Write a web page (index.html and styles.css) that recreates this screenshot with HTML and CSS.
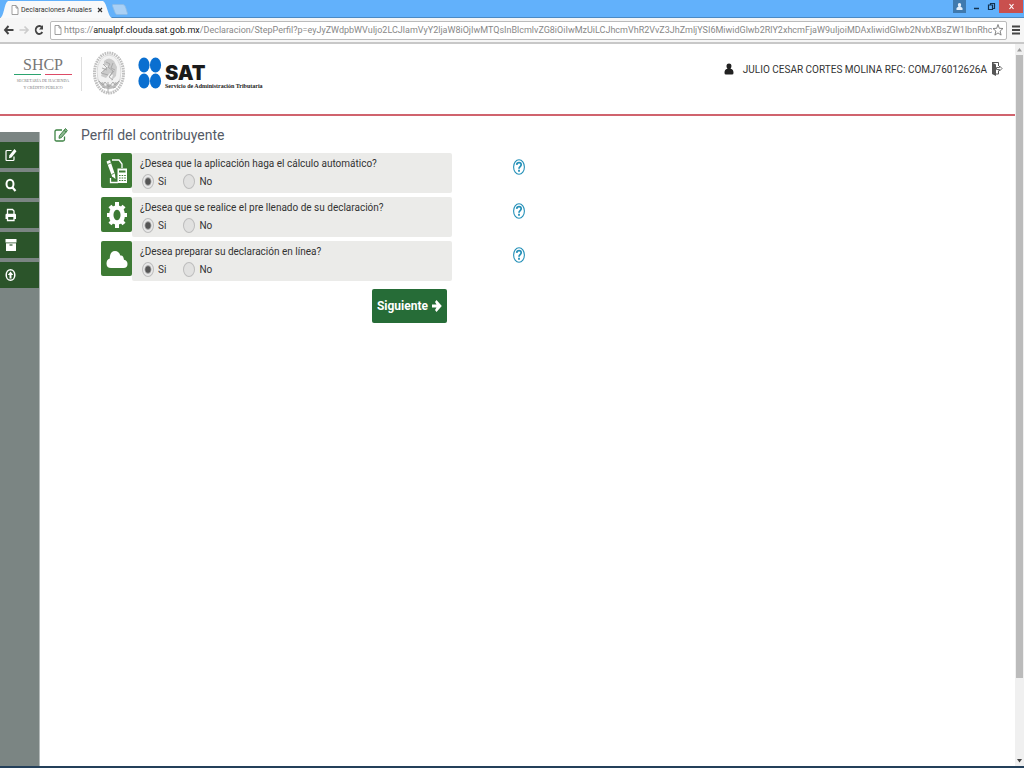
FILE: index.html
```html
<!DOCTYPE html>
<html lang="es">
<head>
    <meta charset="UTF-8">
    <meta name="viewport" content="width=device-width, initial-scale=1.0">
    <title>Declaraciones Anuales</title>
    <link rel="stylesheet" href="styles.css">
</head>
<body>
    <!-- Barra de pestañas -->
    <div class="tab-strip">
        <div class="tab">
            <svg class="tab-shape" viewBox="0 0 112 18" preserveAspectRatio="none"><path d="M0 18 C4 17 4 3 8 1 H103 C107 3 108 17 112 18 Z" fill="#f8f9fa"/></svg>
            <svg class="page-icon" viewBox="0 0 8 10"><path d="M1 .5h4l2 2.500v6.500H1z M5 .5v2.500h2" fill="#fff" stroke="#888" stroke-width=".8"/></svg>
            <span class="tab-title">Declaraciones Anuales</span>
            <button class="tab-close" type="button" aria-label="Cerrar pestaña"><svg viewBox="0 0 6 6"><path d="M1 1l4 4M5 1l-4 4" stroke="#333" stroke-width="1.200"/></svg></button>
        </div>
        <button class="new-tab" type="button" aria-label="Nueva pestaña"><svg viewBox="0 0 16 11"><path d="M1 .5h10q2 0 3 4l1.500 5q0 1-1 1H5q-1.500 0-2-2L.5 2Q0 .5 1 .5z" fill="#a9d0f5" stroke="#8dbbe4" stroke-width=".8"/></svg></button>
        <div class="window-buttons">
            <button class="win-user" type="button" aria-label="Usuario"><svg viewBox="0 0 13 13"><path d="M6.500 3a1.700 1.900 0 0 1 1 3.400L9.500 8v2h-6V8l2-1.600A1.700 1.900 0 0 1 6.500 3z" fill="#e4effa"/></svg></button>
            <button class="win-btn" type="button" aria-label="Minimizar"><svg viewBox="0 0 13 13"><path d="M4 8.500h5" stroke="#12324f" stroke-width="1.500"/></svg></button>
            <button class="win-btn" type="button" aria-label="Restaurar"><svg viewBox="0 0 13 13"><path d="M5.500 5V3.500h4v5H8M3.500 5h4v4.500h-4z" fill="none" stroke="#12324f" stroke-width="1.200"/></svg></button>
            <button class="win-close" type="button" aria-label="Cerrar"><svg viewBox="0 0 13 13"><path d="M4.500 4l4 5M8.500 4l-4 5" stroke="#fff" stroke-width="1.200"/></svg></button>
        </div>
    </div>

    <!-- Barra de direcciones -->
    <div class="toolbar">
        <button class="nav-btn" type="button" aria-label="Atrás"><svg viewBox="0 0 12 12"><path d="M10.500 6H2M5.500 2L2 6l3.500 4" fill="none" stroke="#444" stroke-width="1.900"/></svg></button>
        <button class="nav-btn" type="button" aria-label="Adelante"><svg viewBox="0 0 12 12"><path d="M1.500 6H10M6.500 2.500L10 6 6.500 9.500" fill="none" stroke="#ccc" stroke-width="1.700"/></svg></button>
        <button class="nav-btn" type="button" aria-label="Recargar"><svg viewBox="0 0 12 12"><path d="M9 3.500A3.500 4 0 1 0 9.300 8" fill="none" stroke="#444" stroke-width="1.900"/><path d="M10 1v4.500H6z" fill="#444"/></svg></button>
        <div class="address">
            <svg class="page-icon" viewBox="0 0 8 10"><path d="M1 .5h4l2 2.500v6.500H1z M5 .5v2.500h2" fill="#fff" stroke="#888" stroke-width=".8"/></svg>
            <label class="host" for="url">https://<b>anualpf.clouda.sat.gob.mx</b></label>
            <input class="url" id="url" type="text" value="/Declaracion/StepPerfil?p=eyJyZWdpbWVuIjo2LCJlamVyY2ljaW8iOjIwMTQsInBlcmlvZG8iOiIwMzUiLCJhcmVhR2VvZ3JhZmljYSI6MiwidGlwb2RlY2xhcmFjaW9uIjoiMDAxIiwidGlwb2NvbXBsZW1lbnRhcmlhIjoiIiwic3VicmVnaW1lbiI6">
            <button class="star" type="button" aria-label="Favorito"><svg viewBox="0 0 12 14"><path d="M6 1.500l1.300 3.800 3.700.2-2.900 2.600 1 4L6 9.900 2.900 12.100l1-4L1 5.500l3.700-.2z" fill="#fff" stroke="#777" stroke-width=".9"/></svg></button>
        </div>
        <button class="menu-btn" type="button" aria-label="Menú"><svg viewBox="0 0 8 10"><path d="M0 1.500h8M0 5h8M0 8.500h8" stroke="#444" stroke-width="1.800"/></svg></button>
    </div>

    <div class="viewport">
        <div class="page">
            <header class="header">
                <div class="shcp">
                    <span class="shcp-name">SHCP</span>
                    <span class="shcp-lines"><i class="green"></i><i class="red"></i></span>
                    <span class="shcp-sub">SECRETARÍA DE HACIENDA<br>Y CRÉDITO PÚBLICO</span>
                </div>
                <svg class="seal" viewBox="0 0 34 46">
                    <ellipse cx="17" cy="23" rx="14.500" ry="20" fill="none" stroke="#c0c0c0" stroke-width="3" stroke-dasharray="1.600 .8"/>
                    <ellipse cx="17" cy="22" rx="12" ry="17" fill="#f2f2f2" stroke="#cfcfcf" stroke-width=".7"/>
                    <path d="M12 11q5-5 10 0l3 6-1 9-5 5 2-6-3-2-4 5-5-2 3-7 5-3-5-1z" fill="#cbcbcb"/>
                    <path d="M14 12l4 2-2 3 5 4-3 5M10 18l5 2M21 13l-2 5 4 2M9 23l7 2M22 21l-5 6 4 3M11 14l4 4-6 5" fill="none" stroke="#a5a5a5" stroke-width=".9"/>
                    <path d="M5 28q2 10 12 11Q27 38 29 28l-3 5-3-1-2 4-4-2-4 2-2-4-3 1z" fill="#bcbcbc"/>
                    <path d="M7 31l4 4 2-3 4 5 4-5 2 3 4-4M10 37l3 1M21 38l3-1M16 32v11" fill="none" stroke="#a5a5a5" stroke-width=".9"/>
                </svg>
                <div class="sat">
                    <svg class="sat-dots" viewBox="0 0 24 32">
                        <g fill="#0a6fd0"><ellipse cx="6" cy="8" rx="5.600" ry="7.500"/><ellipse cx="17.500" cy="8" rx="5.600" ry="7.500"/><ellipse cx="6" cy="24" rx="5.600" ry="7.500"/><ellipse cx="17.500" cy="24" rx="5.600" ry="7.500"/></g>
                    </svg>
                    <div class="sat-text">
                        <span class="sat-name">SAT</span>
                        <span class="sat-sub">Servicio de Administración Tributaria</span>
                    </div>
                </div>
                <div class="user">
                    <svg class="user-icon" viewBox="0 0 10 12"><path d="M5 .5c3 0 3 3.500 1.500 5.200C9 6 9.500 8 9.500 10q0 1.500-1.500 1.500H2Q.5 11.500.5 10C.5 8 1 6 3.500 5.700 2 4 2 .5 5 .5z" fill="#222"/></svg>
                    <span class="user-name">JULIO CESAR CORTES MOLINA RFC: COMJ76012626A</span>
                    <a class="logout" href="#" aria-label="Salir"><svg viewBox="0 0 12 16"><path d="M1 1.500l4 2V15l-4-2z" fill="#555"/><path d="M1 1.500h6.500V5M7.500 9.500V13H5" fill="none" stroke="#555"/><path d="M5.500 6.500h3V5L11 7.500 8.500 10V8.500h-3z" fill="#fff" stroke="#555" stroke-width=".9"/></svg></a>
                </div>
            </header>

            <div class="content">
                <nav class="sidebar">
                    <a href="#" aria-label="Editar"><svg viewBox="0 0 12 14"><path d="M9 8.500v3q0 1-1 1H2q-1 0-1-1v-8q0-1 1-1h4.500" fill="none" stroke="#fff" stroke-width="1.200"/><path d="M9.500 1l2 2.200-5 6.300-2.500.8.400-3z" fill="#fff"/></svg></a>
                    <a href="#" aria-label="Buscar"><svg viewBox="0 0 12 14"><ellipse cx="5" cy="6" rx="3.500" ry="4.300" fill="none" stroke="#fff" stroke-width="2"/><path d="M7.500 9.500l3 3.500" stroke="#fff" stroke-width="2.200"/></svg></a>
                    <a href="#" aria-label="Imprimir"><svg viewBox="0 0 12 14"><path d="M2.500 6V1.500h5L9 3v3" fill="none" stroke="#fff" stroke-width="1.300"/><path d="M.5 7q0-1.200 1-1.200h8.500q1 0 1 1.200v4H9V9H2.500v2h-2z" fill="#fff"/><path d="M2.500 9v3.500H9V9" fill="none" stroke="#fff" stroke-width="1.300"/></svg></a>
                    <a href="#" aria-label="Archivo"><svg viewBox="0 0 12 14"><path d="M.5 1h11v3.500H.5z" fill="#fff"/><path d="M1 5.300h10V13H1z" fill="#fff"/><path d="M4.500 7h3" stroke="#2b542a" stroke-width="1.200"/></svg></a>
                    <a href="#" aria-label="Enviar"><svg viewBox="0 0 12 14"><ellipse cx="5.500" cy="7" rx="4.300" ry="5.300" fill="none" stroke="#fff" stroke-width="1.500"/><path d="M5.500 3.500L8.300 7H6.500v3.500h-2V7H2.700z" fill="#fff"/></svg></a>
                </nav>

                <main class="main">
                    <h1 class="title">
                        <svg viewBox="0 0 14 16"><path d="M10.500 9.500v3q0 1.500-1.500 1.500H2.500Q1 14 1 12.500v-8Q1 3 2.500 3H8" fill="none" stroke="#3f8446" stroke-width="1.300"/><path d="M11.500 1.500l1.800 2.200-6 7-2.300.6.400-2.600z" fill="#8db791" stroke="#3f8446"/><path d="M10 3.200l2 2" stroke="#3f8446"/></svg>
                        Perfíl del contribuyente
                    </h1>
                    <form class="profile">
                        <div class="question">
                            <span class="q-icon"><svg viewBox="0 0 22 28"><path d="M6 3h7l3 4v4M4.500 21v4.500H12" fill="none" stroke="#fff" stroke-width="1.300"/><path d="M.5 4.500L4 3l5 14.500.5 4.500-3.500-2.700z" fill="#fff"/><path d="M1.500 7.500l3.500-1.500M5.500 17.500l3-1.200" stroke="#3d7a34" stroke-width=".8"/><path d="M11.500 11.500H21V26h-9.500z" fill="#fff"/><path d="M13 13.500h6.500v2H13z" fill="#3d7a34"/><path d="M13 18.500h7M13 21h7M13 23.500h7" stroke="#3d7a34" stroke-width="1" stroke-dasharray="1.600 1"/></svg></span>
                            <fieldset class="q-box">
                                <legend>¿Desea que la aplicación haga el cálculo automático?</legend>
                                <label><input type="radio" name="calculo" checked>Si</label>
                                <label><input type="radio" name="calculo">No</label>
                            </fieldset>
                            <a class="help" href="#" aria-label="Ayuda"><svg viewBox="0 0 14 18"><ellipse cx="7" cy="9" rx="5.400" ry="7.300" fill="none" stroke="#2490b8" stroke-width="1.100"/><path d="M4.700 6.800C5 4 9.200 4 9.200 6.800 9.200 8.700 7 8.600 7 10.700" fill="none" stroke="#2490b8" stroke-width="1.700"/><path d="M7 11.800v2" stroke="#2490b8" stroke-width="1.800"/></svg></a>
                        </div>
                        <div class="question">
                            <span class="q-icon"><svg viewBox="0 0 22 28"><ellipse cx="11" cy="14" rx="5.800" ry="7.600" fill="none" stroke="#fff" stroke-width="4.500"/><path d="M11 1v5M11 22v5M1 14h4M17 14h4M4 5l3 3.500M18 5l-3 3.500M4 23l3-3.500M18 23l-3-3.500" stroke="#fff" stroke-width="4"/></svg></span>
                            <fieldset class="q-box">
                                <legend>¿Desea que se realice el pre llenado de su declaración?</legend>
                                <label><input type="radio" name="llenado" checked>Si</label>
                                <label><input type="radio" name="llenado">No</label>
                            </fieldset>
                            <a class="help" href="#" aria-label="Ayuda"><svg viewBox="0 0 14 18"><ellipse cx="7" cy="9" rx="5.400" ry="7.300" fill="none" stroke="#2490b8" stroke-width="1.100"/><path d="M4.700 6.800C5 4 9.200 4 9.200 6.800 9.200 8.700 7 8.600 7 10.700" fill="none" stroke="#2490b8" stroke-width="1.700"/><path d="M7 11.800v2" stroke="#2490b8" stroke-width="1.800"/></svg></a>
                        </div>
                        <div class="question">
                            <span class="q-icon"><svg viewBox="0 0 22 28"><path d="M5 23Q.5 23 .5 18.500q0-4 3.200-5Q4 6 9 6q4 0 5.300 4.500 3-.8 3.700 4.200 3.500.8 3.500 4.300 0 4-4 4z" fill="#fff"/></svg></span>
                            <fieldset class="q-box">
                                <legend>¿Desea preparar su declaración en línea?</legend>
                                <label><input type="radio" name="linea" checked>Si</label>
                                <label><input type="radio" name="linea">No</label>
                            </fieldset>
                            <a class="help" href="#" aria-label="Ayuda"><svg viewBox="0 0 14 18"><ellipse cx="7" cy="9" rx="5.400" ry="7.300" fill="none" stroke="#2490b8" stroke-width="1.100"/><path d="M4.700 6.800C5 4 9.200 4 9.200 6.800 9.200 8.700 7 8.600 7 10.700" fill="none" stroke="#2490b8" stroke-width="1.700"/><path d="M7 11.800v2" stroke="#2490b8" stroke-width="1.800"/></svg></a>
                        </div>
                        <div class="actions">
                            <button class="next-btn" type="button">Siguiente<svg viewBox="0 0 10 14"><path d="M0 5.500h4.500L3 3l1.500-2L9.800 7l-5.300 6L3 11l1.500-2.500H0z" fill="#fff"/></svg></button>
                        </div>
                    </form>
                </main>
            </div>
        </div>

        <div class="scrollbar">
            <svg viewBox="0 0 9 11"><path d="M4.500 4L7 7.500H2z" fill="#999"/></svg>
            <div class="thumb"></div>
            <div class="track"></div>
            <svg viewBox="0 0 9 11"><path d="M4.500 7.500L7 4H2z" fill="#444"/></svg>
        </div>
    </div>
    <div class="taskbar"></div>
</body>
</html>
```
FILE: styles.css
```css
:root {
    --azul: #62b1fb;
    --verde: #3d7a34;
    --verde-oscuro: #2b542a;
    --gris: #7b8583;
    --caja: #ebebe9;
}

* {
    margin: 0;
    padding: 0;
    box-sizing: border-box;
}

body {
    display: flex;
    flex-direction: column;
    height: 100vh;
    overflow: hidden;
    font-family: Roboto, sans-serif;
    font-size: 10px;
    color: #333;
    background-color: white;
}

svg {
    display: block;
}

button {
    border: none;
    background: none;
    cursor: pointer;
}

/* Navegador */
.tab-strip {
    position: relative;
    z-index: 0;
    display: flex;
    align-items: flex-start;
    height: 18px;
    background-color: var(--azul);
    border-bottom: 1px solid #4b8ac4;
}

.tab {
    position: relative;
    display: flex;
    align-items: center;
    width: 112px;
    height: 18px;
    padding: 1px 9px 0 11px;
}

.tab-shape {
    position: absolute;
    inset: 0;
    width: 100%;
    height: 100%;
    z-index: -1;
}

.page-icon {
    width: 8px;
    height: 10px;
    flex: none;
}

.tab-title {
    flex: 1;
    margin-left: 2px;
    font-size: 7px;
    white-space: nowrap;
}

.tab-close svg {
    width: 6px;
    height: 6px;
}

.new-tab {
    margin-top: 4px;
}

.new-tab svg {
    width: 16px;
    height: 11px;
}

.window-buttons {
    display: flex;
    margin-left: auto;
    padding-right: 1px;
}

.window-buttons button {
    display: flex;
    justify-content: center;
    width: 15px;
    height: 13px;
}

.window-buttons svg {
    width: 13px;
    height: 13px;
}

.window-buttons .win-user {
    width: 13px;
    margin-right: 3px;
    background-color: #3f79ad;
}

.window-buttons .win-close {
    width: 24px;
    background-color: #c9504e;
}

.toolbar {
    display: flex;
    align-items: center;
    height: 26px;
    padding: 0 4px 0 3px;
    gap: 3px;
    background-color: #f6f6f6;
    border-bottom: 2px solid #c8c8c8;
}

.nav-btn svg {
    width: 12px;
    height: 12px;
}

.address {
    display: flex;
    align-items: center;
    flex: 1;
    min-width: 0;
    height: 19px;
    margin-left: 2px;
    padding: 0 2px 0 3px;
    background-color: white;
    border: 1px solid #bbb;
    border-radius: 2px;
}

.host,
.url {
    font-family: Roboto, sans-serif;
    font-size: 9px;
    color: #888;
}

.host {
    margin-left: 2px;
}

.host b {
    font-weight: normal;
    color: #222;
}

.url {
    flex: 1;
    min-width: 0;
    border: none;
    outline: none;
    background: none;
}

.star svg {
    width: 12px;
    height: 14px;
}

.menu-btn {
    margin-left: 2px;
}

.menu-btn svg {
    width: 8px;
    height: 10px;
}

.viewport {
    display: flex;
    flex: 1;
    min-height: 0;
}

.page {
    display: flex;
    flex-direction: column;
    flex: 1;
    min-width: 0;
}

/* Encabezado */
.header {
    display: flex;
    align-items: flex-start;
    height: 72px;
    padding: 6px 12px 0 14px;
    border-bottom: 2px solid #d0636d;
}

.shcp {
    display: flex;
    flex-direction: column;
    align-items: center;
    width: 68px;
    margin-top: 7px;
    padding-right: 9px;
    border-right: 1px solid #ddd;
    font-family: "Liberation Serif", serif;
    color: #777;
}

.shcp-name {
    font-size: 16px;
    line-height: 16px;
}

.shcp-lines {
    display: flex;
    justify-content: space-between;
    width: 100%;
    margin-top: 1px;
}

.shcp-lines i {
    width: 27px;
    height: 1px;
}

.green {
    background-color: #2ba36f;
}

.red {
    background-color: #dd4a66;
}

.shcp-sub {
    margin-top: 2px;
    font-size: 4px;
    line-height: 7px;
    text-align: center;
    white-space: nowrap;
}

.seal {
    width: 34px;
    height: 46px;
    margin-left: 10px;
}

.sat {
    display: flex;
    margin: 7px 0 0 12px;
}

.sat-dots {
    width: 24px;
    height: 32px;
}

.sat-text {
    display: flex;
    flex-direction: column;
    margin: 6px 0 0 3px;
    color: #1b1b1b;
}

.sat-name {
    font-family: Inter, sans-serif;
    font-size: 20px;
    font-weight: 900;
    line-height: 20px;
}

.sat-sub {
    font-family: "Liberation Serif", serif;
    font-size: 6px;
    font-weight: bold;
    line-height: 7px;
    white-space: nowrap;
}

.user {
    display: flex;
    align-items: center;
    margin: 11px 0 0 auto;
    white-space: nowrap;
}

.user-icon {
    width: 10px;
    height: 12px;
}

.user-name {
    margin: 0 4px 0 9px;
}

.logout svg {
    width: 12px;
    height: 16px;
}

/* Contenido */
.content {
    display: flex;
    flex: 1;
}

.sidebar {
    display: flex;
    flex-direction: column;
    gap: 4px;
    width: 40px;
    margin-top: 16px;
    padding-top: 10px;
    background-color: var(--gris);
    border-right: 1px solid #b4baba;
}

.sidebar a {
    display: flex;
    align-items: center;
    height: 26px;
    padding-left: 5px;
    background-color: var(--verde-oscuro);
}

.sidebar svg {
    width: 12px;
    height: 14px;
}

.main {
    flex: 1;
    padding: 9px 14px 0;
}

.title {
    display: flex;
    align-items: center;
    gap: 13px;
    height: 20px;
    font-size: 14px;
    font-weight: normal;
    color: #555b66;
}

.title svg {
    width: 14px;
    height: 16px;
}

.profile {
    display: flex;
    flex-direction: column;
    gap: 4px;
    margin: 8px 0 0 47px;
}

.question {
    display: flex;
    align-items: flex-start;
}

.q-icon {
    display: flex;
    align-items: center;
    justify-content: center;
    width: 31px;
    height: 35px;
    background-color: var(--verde);
    border-radius: 2px;
}

.q-icon svg {
    width: 22px;
    height: 28px;
}

.q-box {
    display: flex;
    flex-wrap: wrap;
    align-content: flex-start;
    gap: 0 15px;
    width: 320px;
    height: 40px;
    padding: 2px 8px 0;
    border: none;
    border-radius: 2px;
    background-color: var(--caja);
}

.q-box legend {
    float: left;
    width: 100%;
    line-height: 18px;
    white-space: nowrap;
}

.q-box label {
    display: flex;
    align-items: center;
    gap: 4px;
    height: 16px;
    padding-left: 2px;
}

.q-box input {
    appearance: none;
    width: 12px;
    height: 15px;
    border: 1px solid #bdbdbd;
    border-radius: 50%;
    background-color: #e1e1e0;
}

.q-box input:checked {
    background: radial-gradient(ellipse 4px 5px at center, #555 55%, #e8e8e8 95%);
}

.help {
    margin: 5px 0 0 60px;
}

.help svg {
    width: 14px;
    height: 18px;
}

.actions {
    display: flex;
    justify-content: flex-end;
    width: 346px;
    margin-top: 4px;
}

.next-btn {
    display: flex;
    align-items: center;
    justify-content: center;
    gap: 4px;
    width: 75px;
    height: 34px;
    border-radius: 2px;
    background-color: #266c37;
    color: white;
    font-family: Roboto, sans-serif;
    font-size: 12px;
    font-weight: bold;
}

.next-btn svg {
    width: 10px;
    height: 14px;
}

/* Barra de desplazamiento */
.scrollbar {
    display: flex;
    flex-direction: column;
    width: 9px;
    background-color: #f0f0f0;
}

.scrollbar svg {
    width: 9px;
    height: 11px;
}

.thumb {
    flex: 89;
    margin: 0 1px;
    background-color: #bbb;
}

.track {
    flex: 11;
}

.taskbar {
    height: 2px;
    background-color: #24405a;
}
```
